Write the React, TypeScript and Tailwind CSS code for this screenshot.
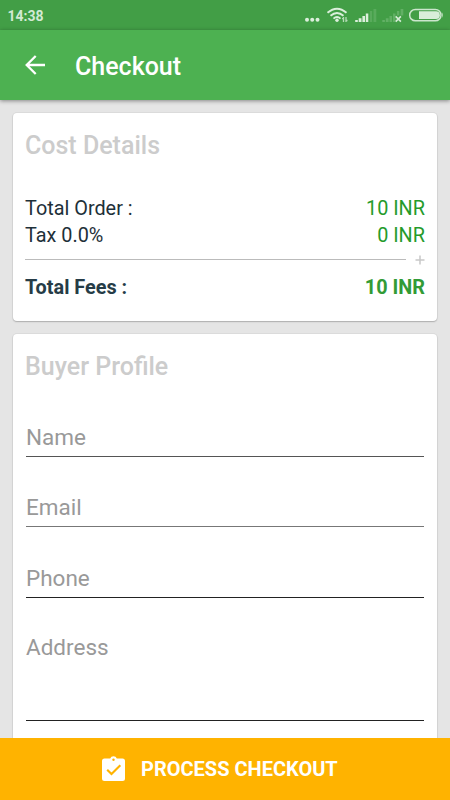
import type { ReactNode } from 'react';

function StatusBar() {
  return (
    <div className="flex h-[30px] shrink-0 items-center justify-between bg-[#429e46] pl-[7.5px] pr-[7px] text-[#d3ead4]">
      <span className="pt-[2px] text-[14px] leading-[20px] font-bold whitespace-nowrap">14:38</span>
      <svg width="140" height="30" viewBox="0 0 140 30" fill="none">
        <g fill="#dcefdc">
          <circle cx="4" cy="19.8" r="2" />
          <circle cx="9.2" cy="19.8" r="2" />
          <circle cx="14.5" cy="19.8" r="2" />
        </g>
        <g stroke="#dcefdc" strokeWidth="1.9">
          <path d="M24.5 12.8Q34 4.6 43.5 12.8" />
          <path d="M27.5 15.8Q34 10.2 40.5 15.8" />
          <path d="M30.5 18.6Q34 15.6 37.5 18.6" />
        </g>
        <circle cx="34" cy="20.2" r="1.7" fill="#dcefdc" />
        <path d="M40.5 17v5M43 17v5M39 18.7h1.5M43 20.5h1.5" stroke="#b5dbb6" strokeWidth="1.3" />
        <path d="M52.2 22v-2h2.6v2zM55.7 22v-3.7h2.8V22zM59.4 22v-6h2.6v6zM62.8 22v-8.5h2.5V22z" fill="#dcefdc" />
        <path d="M66.8 22V11h2.4v11zM70.5 22V9h2.8v13z" fill="#59ab5c" />
        <path d="M79.3 22v-2h2.6v2zM82.8 22v-3.7h2.8V22zM86.5 22v-6h2.6v6zM90 22v-8.5h2.5V22zM93.9 15.5V11h2.4v4.5zM97.6 15.5V9h2.7v6.5z" fill="#62b065" />
        <path d="M92.7 16.4l5.2 5.2M97.9 16.4l-5.2 5.2" stroke="#d6ecd7" strokeWidth="1.6" />
        <rect x="106.7" y="9.5" width="31.3" height="11.3" rx="5.65" stroke="#cce6cd" strokeWidth="1.5" />
        <path d="M139 12.5q1.5 2.6 0 5.2z" fill="#cce6cd" />
        <path d="M116 11.3h17a3.85 3.85 0 0 1 0 7.7h-17z" fill="#d9eeda" />
      </svg>
    </div>
  );
}

function Card({ title, className, children }: { title: string; className: string; children: ReactNode }) {
  return (
    <section className={`mx-[13px] shrink-0 rounded-[4px] bg-white px-[12px] shadow-[0_1px_1.5px_rgba(0,0,0,0.22),0_0_0_1px_rgba(0,0,0,0.04)] ${className}`}>
      <h2 className="text-[25px] leading-[30px] font-medium whitespace-nowrap text-[#cccccc]">{title}</h2>
      {children}
    </section>
  );
}

function CostRow({ label, value, bold = false }: { label: string; value: string; bold?: boolean }) {
  return (
    <div className={`flex h-[27px] items-center justify-between text-[19.85px] leading-[27px] ${bold ? 'font-bold' : ''}`}>
      <span className={bold ? 'text-[#263c47]' : 'text-[#1e3039]'}>{label}</span>
      <span className={bold ? 'text-[#329b36]' : 'text-[#259b2b]'}>{value}</span>
    </div>
  );
}

function Field({ label, className, line }: { label: string; className: string; line: string }) {
  return (
    <label className={`mx-px block border-b text-[22.5px] leading-[30px] text-[#999999] ${className} ${line}`}>
      {label}
    </label>
  );
}

export default function App() {
  return (
    <div className="flex h-[800px] w-[450px] flex-col overflow-hidden bg-[#e5e5e5] font-['Roboto',sans-serif]">
      <StatusBar />
      <header className="z-10 flex h-[70px] shrink-0 items-center bg-[#4db151] pl-[25px] text-white shadow-[0_1px_4px_rgba(0,0,0,0.42)]">
        <svg width="21" height="20" viewBox="0 0 21 20" fill="none" stroke="white" strokeWidth="2.3">
          <path d="M20 10H2M10.7 1L1.7 10l9 9" />
        </svg>
        <h1 className="ml-[29px] pt-[3px] text-[25px] leading-[30px] font-medium">Checkout</h1>
      </header>

      <main className="flex min-h-0 flex-1 flex-col overflow-hidden pt-[12.5px]">
        <Card title="Cost Details" className="h-[208.5px] pt-[18px]">
          <div className="mt-[34px]">
            <CostRow label="Total Order :" value="10 INR" />
            <CostRow label="Tax 0.0%" value="0 INR" />
            <div className="mb-[2px] flex h-[23px] items-center justify-between">
              <div className="mb-px h-px w-[381px] bg-[#bbbbbb]" />
              <svg width="10" height="10" viewBox="0 0 10 10" stroke="#c8c8c8" strokeWidth="1.5">
                <path d="M0.5 5h9M5 0.5v9" />
              </svg>
            </div>
            <CostRow label="Total Fees :" value="10 INR" bold />
          </div>
        </Card>

        <Card title="Buyer Profile" className="mt-[13px] h-[480px] pt-[18px]">
          <Field label="Name" className="mt-[40px] h-[35px]" line="border-[#555555]" />
          <Field label="Email" className="mt-[35px] h-[35px]" line="border-[#777777]" />
          <Field label="Phone" className="mt-[36px] h-[35px]" line="border-[#222222]" />
          <Field label="Address" className="mt-[34px] h-[89px]" line="border-[#222222]" />
        </Card>
      </main>

      <button className="z-10 flex h-[62.5px] w-full shrink-0 items-center bg-[#ffb300] pl-[102px] text-white">
        <svg width="23" height="25" viewBox="0 0 23 25">
          <path fill="white" d="M2.5 2.5h5.7a3.5 3.5 0 0 1 6.6 0h5.7A2.5 2.5 0 0 1 23 5v17.5a2.5 2.5 0 0 1-2.5 2.5h-18A2.5 2.5 0 0 1 0 22.5V5a2.5 2.5 0 0 1 2.5-2.5z" />
          <circle cx="11.5" cy="3.7" r="1.2" fill="#ffb300" />
          <path d="M5.2 13.8l4.3 4.3 8.8-8.8" fill="none" stroke="#ffb300" strokeWidth="2.1" />
        </svg>
        <span className="ml-[16px] text-[20px] leading-[24px] font-bold whitespace-nowrap">PROCESS CHECKOUT</span>
      </button>
    </div>
  );
}
